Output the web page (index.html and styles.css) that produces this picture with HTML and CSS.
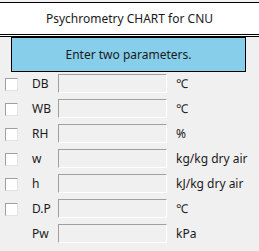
FILE: index.html
```html
<!DOCTYPE html>
<html lang="en">
<head>
    <meta charset="UTF-8">
    <title>Psychrometry CHART for CNU</title>
    <link rel="stylesheet" href="styles.css">
</head>
<body>
    <div class="title-bar">Psychrometry CHART for CNU</div>

    <div class="status">Enter two parameters.</div>

    <div class="params">
        <span class="check"></span><span class="label">DB</span><span class="field"></span><span class="unit">℃</span>
        <span class="check"></span><span class="label">WB</span><span class="field"></span><span class="unit">℃</span>
        <span class="check"></span><span class="label">RH</span><span class="field"></span><span class="unit">%</span>
        <span class="check"></span><span class="label">w</span><span class="field"></span><span class="unit">kg/kg dry air</span>
        <span class="check"></span><span class="label">h</span><span class="field"></span><span class="unit">kJ/kg dry air</span>
        <span class="check"></span><span class="label">D.P</span><span class="field"></span><span class="unit">℃</span>
        <span class="nocheck"></span><span class="label">Pw</span><span class="field"></span><span class="unit">kPa</span>
    </div>
</body>
</html>
```

FILE: styles.css
```css
body {
    margin: 0;
    background: #f0f0f0;
    font-family: "Noto Sans", "Noto Sans CJK KR", sans-serif;
    font-size: 12px;
    color: #1a1a1a;
}
.title-bar {
    margin-top: 2px;
    height: 31px;
    line-height: 31px;
    background: white;
    border-top: 1px solid #000;
    border-bottom: 3px double #000;
    text-align: center;
}
.status {
    margin: 0 13px 0 11px;
    height: 33px;
    line-height: 33px;
    background: #87ceeb;
    border: 1px solid #000;
    text-align: center;
}
.params {
    display: grid;
    grid-template-columns: 27px 26px 109px 1fr;
    grid-auto-rows: 19px;
    row-gap: 6px;
    align-items: center;
    margin-top: 2px;
    padding-left: 5px;
}
.check {
    width: 11px;
    height: 11px;
    background: white;
    border: 1px solid;
    border-color: #a0a0a0 #e3e3e3 #e3e3e3 #a0a0a0;
    margin-top: 1px;
}
.field {
    height: 17px;
    border: 1px solid;
    border-color: #a0a0a0 #fff #fff #a0a0a0;
}
.unit {
    padding-left: 9px;
}
```
